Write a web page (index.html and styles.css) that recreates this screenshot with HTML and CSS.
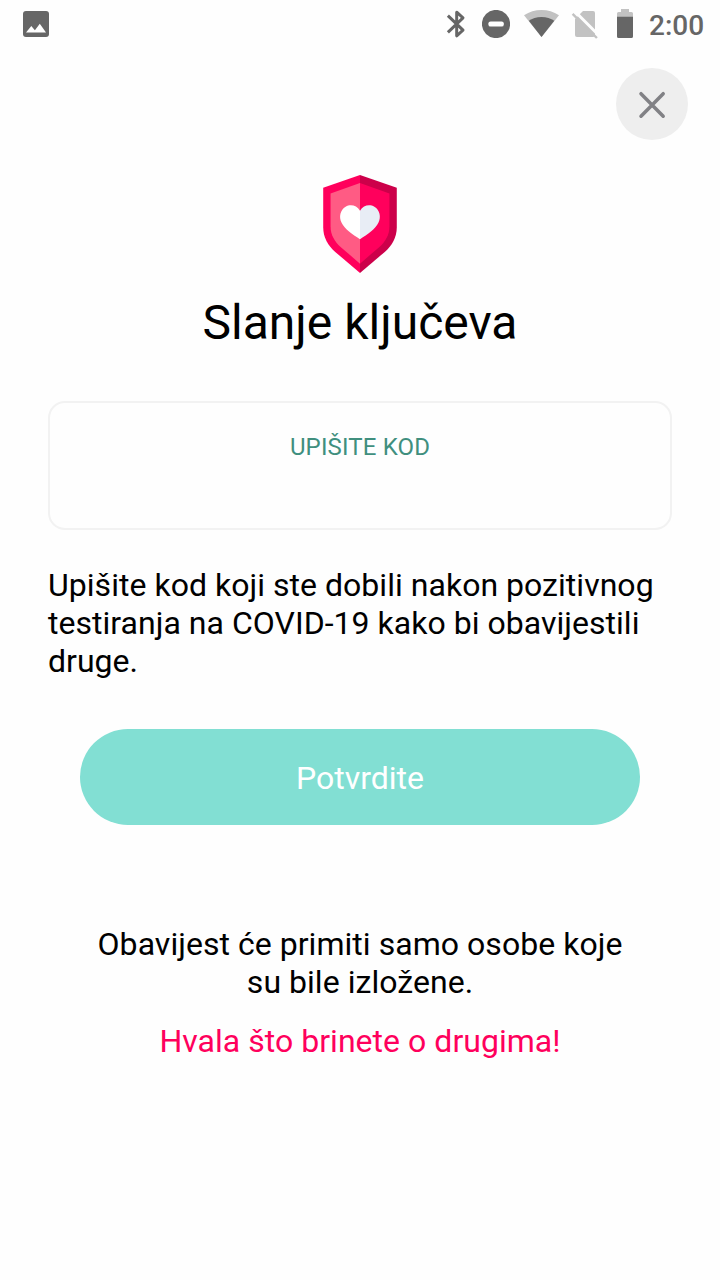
FILE: index.html
```html
<!DOCTYPE html>
<html lang="hr">
<head>
<meta charset="utf-8">
<title>Slanje ključeva</title>
<link rel="stylesheet" href="styles.css">
</head>
<body>
<div class="status-bar">
  <svg class="icon-image" width="28" height="28" viewBox="22 10 28 28"><rect x="23" y="11" width="26" height="26" rx="3" fill="#666"/><path d="M26 32.500l5.300-6.500 3.600 4.300 4.900-6.500 6.200 8.700z" fill="#fefefe"/></svg>
  <div class="status-icons">
    <svg width="20" height="28" viewBox="446 10 20 28" fill="none" stroke="#666" stroke-width="3"><path d="M447.900 15.600L463 30.200 456.700 35.800V12.200L463 17.800 447.900 32.400" stroke-linejoin="round"/></svg>
    <svg class="icon-dnd" width="28" height="28" viewBox="482 10 28 28"><circle cx="496" cy="24" r="14.100" fill="#666"/><rect x="488.400" y="21.400" width="15.400" height="5.200" rx="2.200" fill="#fefefe"/></svg>
    <svg class="icon-wifi" width="36" height="28" viewBox="524 10 36 28"><path d="M541.500 37L524 15.300Q532 10 541.500 10T559 15.300Z" fill="#c2c2c2"/><path d="M541.500 37L528.800 20.800Q534 17 541.500 17T554.300 20.800Z" fill="#666"/></svg>
    <svg class="icon-sim" width="28" height="28" viewBox="571 11 28 28"><path d="M583 11h10q2 0 2 2v22q0 2-2 2h-16q-2 0-2-2V19z" fill="#c2c2c2"/><path d="M575 11.500L599 35.500" stroke="#fefefe" stroke-width="3"/><path d="M572.600 13.800L596.900 38" stroke="#c2c2c2" stroke-width="2.400"/></svg>
    <svg class="icon-battery" width="16" height="29" viewBox="617 9 16 29"><path d="M621 9h8v3h2.500q1.500 0 1.500 1.500V17H617v-3.500q0-1.500 1.500-1.500H621z" fill="#c2c2c2"/><path d="M617 16.700h16v19.700q0 1.600-1.600 1.600h-12.800q-1.600 0-1.600-1.600z" fill="#666"/></svg>
    <span class="clock">2:00</span>
  </div>
</div>
<div class="top-row">
  <button class="close" aria-label="Zatvori"><svg width="72" height="72" viewBox="0 0 72 72"><path d="M25 25.700L47.200 48.200M47.200 25.700L25 48.200" fill="none" stroke="#818185" stroke-width="3.500" stroke-linecap="round"/></svg></button>
</div>
<main class="content">
  <svg class="shield" width="74" height="98" viewBox="40 30 220 293">
    <path d="M150 30L40 68V186C40 216 54 240 76 260L150 323Z" fill="#ff005c"/>
    <path d="M150 30L260 68V186C260 216 246 240 224 260L150 323Z" fill="#cc004a"/>
    <path d="M150 54L62 85V183C62 209 74 229 92 245L150 295Z" fill="#ff5b84"/>
    <path d="M150 54L238 85V183C238 209 226 229 208 245L150 295Z" fill="#ff005c"/>
    <path d="M150 137C140 120 121 117 107 125C91 134 86 156 95 173C104 192 127 208 150 222Z" fill="#fff"/>
    <path d="M150 137C160 120 179 117 193 125C209 134 214 156 205 173C196 192 173 208 150 222Z" fill="#e8edf5"/>
  </svg>
  <h1 class="title">Slanje ključeva</h1>
  <div class="code-field"><span class="code-label">UPIŠITE KOD</span></div>
  <p class="hint">Upišite kod koji ste dobili nakon pozitivnog testiranja na COVID-19 kako bi obavijestili druge.</p>
  <button class="confirm">Potvrdite</button>
  <p class="notice">Obavijest će primiti samo osobe koje<br>su bile izložene.</p>
  <p class="thanks">Hvala što brinete o drugima!</p>
</main>
</body>
</html>
```
FILE: styles.css
```css
* {
  box-sizing: border-box;
}
body {
  margin: 0;
  min-height: 1280px;
  background: #fefefe;
  color: #000;
  font-family: Roboto, sans-serif;
  font-size: 32px;
  line-height: 38px;
}
svg {
  display: block;
  flex: none;
}
button {
  border: 0;
  padding: 0;
  font: inherit;
}
.status-bar {
  height: 48px;
  padding: 0 16px 0 22px;
  display: flex;
  align-items: center;
  justify-content: space-between;
}
.status-icons {
  display: flex;
  align-items: center;
}
.icon-dnd {
  margin-left: 16px;
}
.icon-wifi {
  margin-left: 14px;
}
.icon-sim {
  margin: 2px 0 0 11px;
}
.icon-battery {
  margin: 0 0 1px 18px;
}
.clock {
  width: 55px;
  margin: 3px 0 0 16px;
  font-size: 28px;
  font-weight: 500;
  line-height: 32px;
  color: #666;
  white-space: nowrap;
}
.top-row {
  display: flex;
  justify-content: flex-end;
  padding: 20px 32px 0;
}
.close {
  width: 72px;
  height: 72px;
  border-radius: 50%;
  background: #eee;
}
.content {
  display: flex;
  flex-direction: column;
  align-items: center;
  padding: 35px 48px 0;
}
.title {
  margin: 22px 0 0;
  font-size: 48px;
  font-weight: 400;
  line-height: 56px;
}
.code-field {
  width: 624px;
  height: 129px;
  margin-top: 50px;
  padding-top: 30px;
  border: 2px solid #f2f2f2;
  border-radius: 17px;
  text-align: center;
}
.code-label {
  display: block;
  font-size: 24px;
  line-height: 28px;
  letter-spacing: 0.15px;
  color: #408f7e;
}
.hint {
  width: 624px;
  margin: 36px 0 0;
  letter-spacing: 0.03px;
}
.confirm {
  width: 560px;
  height: 96px;
  margin-top: 49px;
  padding-top: 2px;
  border-radius: 48px;
  background: #82dfd3;
  color: #fff;
}
.notice {
  margin: 100px 0 0;
  text-align: center;
  letter-spacing: 0.04px;
}
.thanks {
  margin: 21px 0 0;
  letter-spacing: 0.03px;
  color: #ff005c;
}
```
